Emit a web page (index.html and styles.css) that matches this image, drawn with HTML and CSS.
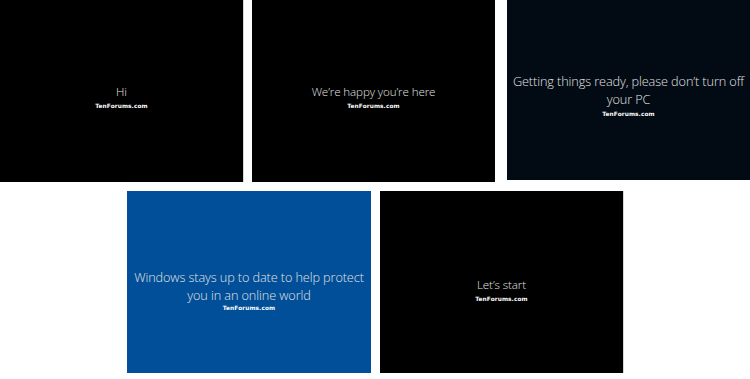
FILE: index.html
```html
<!DOCTYPE html>
<html lang="en">
<head>
    <meta charset="UTF-8">
    <meta name="viewport" content="width=device-width, initial-scale=1.0">
    <title>Windows 10 OOBE screens</title>
    <link rel="stylesheet" href="styles.css">
</head>
<body>
    <div class="row row-top">
        <div class="shot shot-edge">
            <div class="message">Hi</div>
            <div class="watermark">TenForums.com</div>
        </div>
        <div class="shot">
            <div class="message">We’re happy you’re here</div>
            <div class="watermark">TenForums.com</div>
        </div>
        <div class="shot shot-ready">
            <div class="message big">Getting things ready, please don’t turn off your PC</div>
            <div class="watermark">TenForums.com</div>
        </div>
    </div>

    <div class="row row-bottom">
        <div class="shot shot-blue">
            <div class="message big">Windows stays up to date to help protect you in an online world</div>
            <div class="watermark">TenForums.com</div>
        </div>
        <div class="shot shot-edge shot-start">
            <div class="message">Let’s start</div>
            <div class="watermark">TenForums.com</div>
        </div>
    </div>
</body>
</html>
```

FILE: styles.css
```css
body {
    margin: 0;
    background: #fff;
    font-family: "Open Sans", "Noto Sans", sans-serif;
    width: 750px;
    height: 379px;
    overflow: hidden;
}

.row {
    display: flex;
    gap: 9px;
}

.row-top {
    height: 182px;
    gap: 8px;
}

.row-bottom {
    justify-content: center;
    margin-top: 9px;
    padding-left: 1px;
}

/* Each screenshot */
.shot {
    width: 243px;
    height: 182px;
    box-sizing: border-box;
    padding-top: 10px;
    background: #000;
    color: #e2e2e2;
    display: flex;
    flex-direction: column;
    align-items: center;
    justify-content: center;
    text-align: center;
}

/* thin grey edge on the right of a couple of shots */
.shot-edge {
    width: 244px;
    border-right: 1px solid #d4d4d4;
}

.shot-ready {
    margin-left: auto;
    height: 180px;
    background: #020b14;
    padding-top: 8px;
}

.shot-blue {
    width: 244px;
    background: #004f98;
    padding-top: 14px;
}

.shot-blue .watermark {
    margin-top: 1px;
}

.shot-start {
    padding-top: 15px;
}

.message {
    font-weight: 300;
    font-size: 11.6px;
    line-height: 16px;
    letter-spacing: -0.1px;
}

.message.big {
    font-size: 12.7px;
    line-height: 18px;
    padding: 0 3px;
}

.watermark {
    font-family: "DejaVu Sans", Verdana, sans-serif;
    font-weight: bold;
    font-size: 5.8px;
    color: #fff;
    margin-top: 3px;
    letter-spacing: 0.1px;
}
```
